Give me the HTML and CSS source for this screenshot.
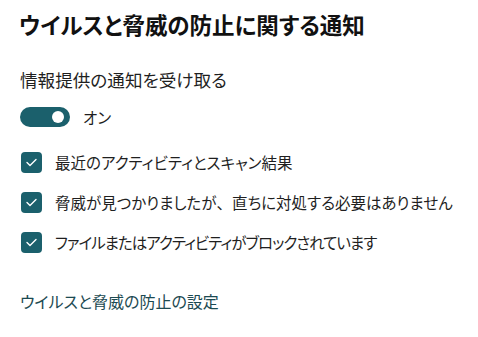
FILE: index.html
```html
<!DOCTYPE html>
<html lang="ja">
<head>
  <meta charset="utf-8">
  <title>ウイルスと脅威の防止に関する通知</title>
  <link rel="stylesheet" href="styles.css">
</head>
<body>
<div class="panel">
  <h1 class="title">ウイルスと脅威の防止に関する通知</h1>
  <p class="label">情報提供の通知を受け取る</p>
  <div class="toggle-row">
    <span class="toggle"><span class="knob"></span></span>
    <span class="toggle-text">オン</span>
  </div>
  <ul class="checks">
    <li class="check">
      <span class="box">
        <svg width="21" height="21" viewBox="0 0 21 21"><polyline points="6,10.5 9,13.5 15,7.5" fill="none" stroke="#fff" stroke-width="1.4" stroke-linecap="round" stroke-linejoin="round"/></svg>
      </span>
      <span>最近のアクティビティとスキャン結果</span>
    </li>
    <li class="check">
      <span class="box">
        <svg width="21" height="21" viewBox="0 0 21 21"><polyline points="6,10.5 9,13.5 15,7.5" fill="none" stroke="#fff" stroke-width="1.4" stroke-linecap="round" stroke-linejoin="round"/></svg>
      </span>
      <span>脅威が見つかりましたが<span class="full">、</span>直ちに対処する必要はありません</span>
    </li>
    <li class="check">
      <span class="box">
        <svg width="21" height="21" viewBox="0 0 21 21"><polyline points="6,10.5 9,13.5 15,7.5" fill="none" stroke="#fff" stroke-width="1.4" stroke-linecap="round" stroke-linejoin="round"/></svg>
      </span>
      <span class="narrow">ファイルまたはアクティビティがブロックされています</span>
    </li>
  </ul>
  <a class="link" href="#">ウイルスと脅威の防止の設定</a>
</div>
</body>
</html>
```

FILE: styles.css
```css
html, body {
    margin: 0;
    padding: 0;
    background: #fff;
}

body {
    color: #1f1f1f;
    font-family: "Noto Sans CJK JP", "Noto Sans", sans-serif;
    font-feature-settings: "palt";
}

.panel {
    display: flex;
    flex-direction: column;
    align-items: flex-start;
    padding: 9px 20px 0 19px;
}

.title {
    margin: 0;
    font-size: 22.5px;
    font-weight: 700;
    line-height: 30px;
    color: #111;
}

.label {
    margin: 29px 0 0 1px;
    font-size: 17.6px;
    line-height: 24px;
}

.toggle-row {
    display: flex;
    align-items: center;
    gap: 13px;
    height: 24px;
    margin: 13px 0 0 1px;
    font-size: 15.5px;
}

.toggle {
    display: flex;
    align-items: center;
    justify-content: flex-end;
    box-sizing: border-box;
    width: 50px;
    height: 20px;
    padding-right: 6px;
    border-radius: 10px;
    background: #1b606c;
}

.knob {
    width: 12px;
    height: 12px;
    border-radius: 50%;
    background: #fff;
}

.checks {
    list-style: none;
    margin: 13px 0 0 2px;
    padding: 0;
}

.check {
    display: flex;
    align-items: center;
    gap: 13px;
    height: 40px;
    font-size: 15.5px;
}

.full {
    font-feature-settings: normal;
}

.narrow {
    letter-spacing: -1px;
}

.box {
    display: flex;
    width: 21px;
    height: 21px;
    border-radius: 4px;
    background: #1b606c;
}

.link {
    margin: 27px 0 0 1px;
    font-size: 16px;
    line-height: 24px;
    color: #1c4a52;
    text-decoration: none;
}
```
